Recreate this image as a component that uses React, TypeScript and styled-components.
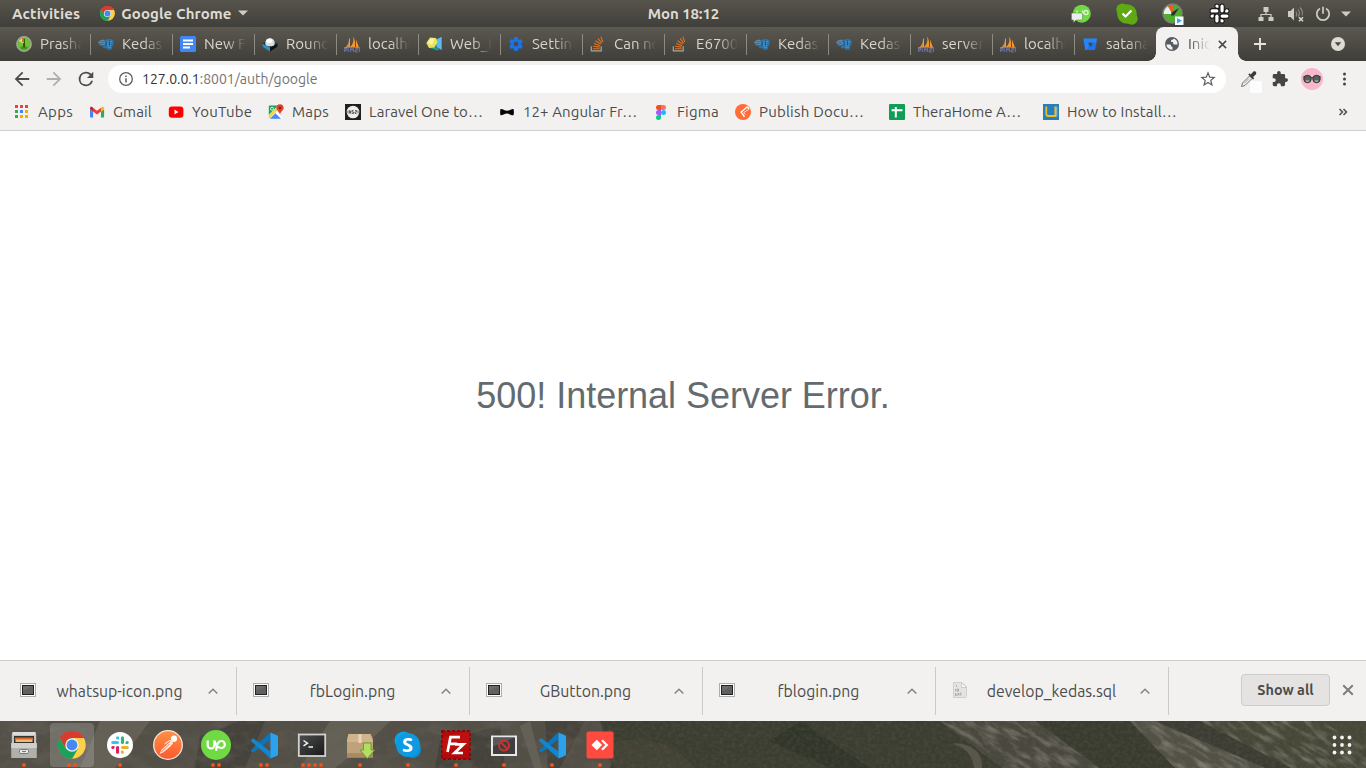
import React from "react";
import styled, { createGlobalStyle } from "styled-components";

const GlobalStyle = createGlobalStyle`
  * { box-sizing: border-box; }
  body { margin: 0; overflow: hidden; background: #fff; }
  svg { display: block; flex: none; overflow: visible; }
`;

const Desktop = styled.div`
  width: 1366px;
  height: 768px;
  display: flex;
  flex-direction: column;
  font-family: Ubuntu, "Noto Sans", "Open Sans", sans-serif;
  font-size: 15px;
  color: #4c4c4c;
`;

const Text = styled.span<{ $spacing?: number }>`
  white-space: pre;
  letter-spacing: ${(p) => p.$spacing ?? 0}px;
`;

/* ---------- system bar ---------- */

const SystemBar = styled.header`
  height: 27px;
  flex: none;
  display: grid;
  grid-template-columns: 1fr 80px 1fr;
  align-items: center;
  background: linear-gradient(#57544c, #403f3a);
  color: #dfdbd2;
  font-weight: 600;
  line-height: 17px;
`;

const SystemLeft = styled.div`
  display: flex;
  align-items: center;
  padding: 0 0 1px 12px;
`;

const AppMenu = styled.div`
  display: flex;
  align-items: center;
  gap: 6px;
  margin-left: 20px;
`;

const Clock = styled.div`
  padding: 0 0 1px 1px;
  text-align: center;
`;

const Tray = styled.div`
  display: flex;
  align-items: center;
  justify-content: flex-end;
  padding-right: 20px;
`;

const TraySlot = styled.div<{ $width: number }>`
  width: ${(p) => p.$width}px;
  display: flex;
  justify-content: center;
`;

/* ---------- tab strip ---------- */

const TabStrip = styled.nav`
  height: 34px;
  flex: none;
  display: flex;
  padding-left: 8px;
  background: linear-gradient(#5b5850, #3f3e39);
`;

const Tab = styled.div`
  width: 82px;
  height: 34px;
  display: flex;
  align-items: center;
  padding-left: 8px;
  color: #d9d6ce;
`;

const TabTitle = styled.div<{ $width: number }>`
  width: ${(p) => p.$width}px;
  margin: 0 0 2px 8px;
  overflow: hidden;
  mask-image: linear-gradient(to right, #000 calc(100% - 20px), transparent);
`;

const TabDivider = styled.i`
  width: 1px;
  height: 21px;
  margin-left: auto;
  margin-right: -1px;
  background: #8d8a82;
`;

const ActiveTab = styled(Tab)`
  position: relative;
  background: #f2f1f0;
  border-radius: 8px 8px 0 0;
  color: #4a4a4a;
  &::before,
  &::after {
    content: "";
    position: absolute;
    bottom: 0;
    width: 8px;
    height: 8px;
  }
  &::before {
    left: -8px;
    background: radial-gradient(circle at 0 0, transparent 7.5px, #f2f1f0 8px);
  }
  &::after {
    right: -8px;
    background: radial-gradient(circle at 100% 0, transparent 7.5px, #f2f1f0 8px);
  }
`;

const TabClose = styled.div`
  margin-left: 8px;
`;

const StripButtons = styled.div`
  flex: 1;
  display: flex;
  align-items: center;
  justify-content: space-between;
  padding: 0 20px 0 16px;
`;

/* ---------- toolbar and bookmarks ---------- */

const Toolbar = styled.div`
  height: 36px;
  flex: none;
  display: flex;
  align-items: center;
  padding-left: 14px;
  background: #f2f1f0;
`;

const NavButtons = styled.div`
  display: flex;
  gap: 16px;
  margin-right: 14px;
`;

const AddressBar = styled.div`
  width: 1118px;
  height: 28px;
  display: flex;
  align-items: center;
  justify-content: space-between;
  padding: 0 10px;
  border-radius: 14px;
  background: #fff;
`;

const Address = styled.div`
  display: flex;
  align-items: center;
  gap: 8px;
  font-size: 14px;
  color: #737373;
  b { font-weight: 400; color: #333; }
`;

const Extensions = styled.div`
  flex: 1;
  display: flex;
  align-items: center;
  padding-left: 14px;
`;

const Extension = styled.div<{ $gap: number }>`
  position: relative;
  margin-right: ${(p) => p.$gap}px;
`;

const ExtensionBadge = styled.i`
  position: absolute;
  left: 10px;
  top: 11px;
  width: 12px;
  height: 12px;
  border-radius: 2px;
  background: #fdfdfd;
`;

const BookmarkBar = styled.div`
  height: 34px;
  flex: none;
  display: flex;
  align-items: center;
  gap: 16px;
  padding: 0 18px 4px 14px;
  background: #f2f1f0;
  border-bottom: 1px solid #cfcfcf;
`;

const Bookmark = styled.div`
  display: flex;
  align-items: center;
  gap: 8px;
`;

const BookmarkTitle = styled.div<{ $width: number }>`
  width: ${(p) => p.$width}px;
  line-height: 20px;
`;

const Overflow = styled.div`
  margin-left: auto;
`;

/* ---------- page ---------- */

const Page = styled.main`
  flex: 1;
  display: flex;
  align-items: center;
  justify-content: center;
  background: #fff;
`;

const ErrorTitle = styled.h1`
  margin: 0;
  font: 400 36px/40px "Liberation Sans", Arial, sans-serif;
  letter-spacing: -0.03px;
  color: #636b6f;
`;

/* ---------- downloads ---------- */

const DownloadShelf = styled.section`
  height: 61px;
  flex: none;
  display: flex;
  align-items: center;
  padding: 0 12px 0 4px;
  background: #f2f1f0;
  border-top: 1px solid #cbcbcb;
`;

const Download = styled.div`
  width: 233px;
  height: 48px;
  display: flex;
  align-items: center;
  padding-left: 16px;
  border-right: 1px solid #cbcac9;
`;

const FileIcon = styled.div`
  margin-bottom: 2px;
`;

const FileName = styled.div`
  width: 167px;
  text-align: center;
  font-size: 15.8px;
`;

const Caret = styled.div`
  width: 19px;
  display: flex;
  justify-content: center;
`;

const ShelfActions = styled.div`
  margin-left: auto;
  margin-bottom: 2px;
  display: flex;
  align-items: center;
  gap: 12px;
`;

const ShowAll = styled.button`
  width: 89px;
  height: 32px;
  padding: 0;
  border: 1px solid #cdcccb;
  border-radius: 4px;
  background: #e4e3e2;
  font: inherit;
  font-size: 14.4px;
  font-weight: 600;
  color: #4c4c4c;
`;

/* ---------- dock ---------- */

const Dock = styled.footer`
  height: 47px;
  flex: none;
  position: relative;
  display: flex;
  align-items: stretch;
  overflow: hidden;
  background: #3c3b33;
`;

const Wallpaper = styled.svg`
  position: absolute;
  inset: 0;
`;

const DockItem = styled.div<{ $active?: boolean }>`
  position: relative;
  width: 44px;
  height: 44px;
  margin: 2px;
  display: flex;
  flex-direction: column;
  align-items: center;
  justify-content: center;
  border-radius: 4px;
  background: ${(p) => (p.$active ? "rgba(255,255,255,.18)" : "transparent")};
`;

const Dots = styled.div`
  position: absolute;
  bottom: 0;
  left: 0;
  right: 0;
  display: flex;
  justify-content: center;
  gap: 2px;
  i { width: 4px; height: 4px; border-radius: 50%; background: #e95420; }
`;

const AppGrid = styled.div`
  position: relative;
  margin: 14px 14px 0 auto;
`;

/* ---------- icons ---------- */

const Svg = ({ s = 16, h, v, children }: { s?: number; h?: number; v?: string; children: React.ReactNode }) => (
  <svg width={s} height={h ?? s} viewBox={v ?? `0 0 ${s} ${h ?? s}`} fill="none">
    {children}
  </svg>
);

const ChromeIcon = ({ s }: { s: number }) => (
  <Svg s={s} v="0 0 48 48">
    <circle cx="24" cy="24" r="23.500" fill="#fdd049" />
    <path d="M24 24 3.200 12A24 24 0 0 1 44.800 12H24Z" fill="#db3b2c" />
    <path d="M3.200 12A24 24 0 0 0 24 48L34.400 30 13.600 30Z" fill="#1da05a" />
    <path d="M3.200 12 13.600 30 24 24V12Z" fill="#1da05a" />
    <path d="M3.200 12A24 24 0 0 1 44.800 12H24A12 12 0 0 0 13 19.500L12 27.200Z" fill="#db3b2c" />
    <circle cx="24" cy="24" r="11.500" fill="#f1f1f1" />
    <circle cx="24" cy="24" r="9.300" fill="#4688f4" />
  </Svg>
);

const TimerIcon = () => (
  <Svg>
    <circle cx="8" cy="8" r="7.200" fill="#68b92d" stroke="#a4a8a1" strokeWidth="1.400" />
    <circle cx="8" cy="8" r="5.800" fill="#6fc52c" />
    <path d="M3.600 11.700A5.800 5.800 0 0 0 12.400 11.700L8 9Z" fill="#4a9a1b" />
    <path d="M8 8 3 5A5.800 5.800 0 0 1 7 2.300Z" fill="#e6e27a" />
    <path d="M7 2.300 6.500 6" stroke="#e24b28" strokeWidth="1.200" />
    <path d="M8.300 2.800V7" stroke="#27391a" strokeWidth="1" />
    <path d="M7.200 7h1.700l-.3 4.500H7.600Z" fill="#1d2d12" />
  </Svg>
);

const PgIcon = () => (
  <Svg>
    <path d="M.3 7C2 4.500 4.500 4.200 6.500 4.500 8 2.800 15 2.200 15.600 5c.4 2-.2 4.500-1.200 5L13.500 13.800H9.200l-.7-2-2.500.7-1.500-1.500 1-1.500L2 9.500Z" fill="#2a74ad" />
    <path d="M1 7.300 5 6l3 1M2.500 9.200l4.500-1.500M8.500 5.500h5.500M9 7.300h4.500M9 9.200l4 .3M9.500 11.300h3.500" stroke="#7f9fb5" strokeWidth=".6" />
    <path d="M.3 6.500C2 4.200 5 4 6.500 4.400" stroke="#8aa0af" strokeWidth=".8" />
    <path d="M8 5v4.500M11.500 4.500v5" stroke="#164a77" strokeWidth=".8" />
  </Svg>
);

const DocsIcon = () => (
  <Svg>
    <rect width="16" height="16" rx="1.500" fill="#4285f4" />
    <path d="M3 4.500h10M3 8h10M3 11.500h7" stroke="#fff" strokeWidth="1.800" />
  </Svg>
);

const RoundcubeIcon = () => (
  <Svg>
    <path d="M.3 7.500 8 4l7.700 3.500L8 12Z" fill="#1c323d" />
    <path d="M.5 7.800 8 11.500v4L.8 10.800Z" fill="#2b93c6" />
    <path d="M15.500 7.800 8 11.500v4l7.300-4.700Z" fill="#0c1114" />
    <path d="M3.200 7.500A4.800 5.500 0 0 1 12.800 7.500C12.800 9.500 10.500 10.300 8 10.300S3.200 9.500 3.200 7.500Z" fill="#d6dde0" />
    <ellipse cx="7.300" cy="5" rx="3" ry="2.200" fill="#fff" />
  </Svg>
);

const PmaIcon = () => (
  <Svg>
    <path d="M5 2.500C5.200 6 4 9 .8 12l4.700-1.200Z" fill="#d98a38" />
    <path d="M8.800.3C10 4 9.500 8 5.800 11.500l5.200-.5C11.600 7 11 3 8.800.3Z" fill="#f7941d" />
    <path d="m12 3.500 3 8-3-.3Z" fill="#f0953a" />
    <path d="M5.500 2.500v8.500" stroke="#f6b46a" strokeWidth=".8" />
    <path d="M.7 16v-3.800h2v2h-2m3.500 1.800v-3.800m2.500 3.800v-3.800l1.300 1.800 1.300-1.800v3.800m2-3.800h2v1.800h-2v2h2.500m1.500 0v-3.800" stroke="#7478aa" strokeWidth="1" />
    <path d="M0 11.800q8-1.500 16 0" stroke="#9b9dbb" strokeWidth=".7" />
  </Svg>
);

const WebIcon = () => (
  <Svg>
    <path d="M9.500 4 15.700.8V14l-5.200-3Z" fill="#58bdf0" />
    <path d="M2.500 11.500 8 9.500l5.500 4-2.500 1Z" fill="#1f9e83" />
    <path d="M.3 7 4 1.500 10 2l1.500 4L8.500 11.500 3 12Z" fill="#e7e35c" />
    <path d="M1.500 6.500 4.600 2.500l3.900.5L6 9Z" fill="#f6f5a6" />
  </Svg>
);

const GearIcon = () => (
  <Svg v="0.500 0.500 23 23">
    <path
      fill="#1a73e8"
      d="M19.430 12.980a8 8 0 0 0 0-1.960l2.110-1.650a.5.5 0 0 0 .12-.64l-2-3.460a.5.5 0 0 0-.61-.22l-2.490 1a7.300 7.300 0 0 0-1.690-.98l-.38-2.650A.5.5 0 0 0 14 2h-4a.5.5 0 0 0-.49.42l-.38 2.650c-.61.250-1.170.590-1.690.980l-2.490-1a.5.5 0 0 0-.61.220l-2 3.460a.5.5 0 0 0 .12.640l2.110 1.650a8 8 0 0 0 0 1.960l-2.110 1.650a.5.5 0 0 0-.12.640l2 3.460c.12.220.39.300.61.220l2.490-1c.52.400 1.080.730 1.690.980l.38 2.650c.03.240.24.420.49.420h4c.25 0 .46-.18.49-.42l.38-2.650a7.300 7.300 0 0 0 1.690-.98l2.490 1c.23.090.49 0 .61-.22l2-3.460a.5.5 0 0 0-.12-.64ZM12 15.500a3.500 3.500 0 1 1 0-7 3.500 3.500 0 0 1 0 7Z"
    />
  </Svg>
);

const StackIcon = () => (
  <Svg>
    <path d="M1.300 10.300v4.600h9.900v-4.600" stroke="#a9a7a3" strokeWidth="1.200" />
    <path d="M3 12.800h6.700M3.200 10.200l6.400.9M4 7.400l6 2.300M5.500 4.700l5.300 3.600M8 2.400l3.700 4.700M10.800.6l2 5.400" stroke="#e8701a" strokeWidth="1.100" />
  </Svg>
);

const BitbucketIcon = () => (
  <Svg>
    <path d="M2 2.500h12.500a.6.600 0 0 1 .5.700l-1.900 10.300a.7.700 0 0 1-.6.500H4a.8.800 0 0 1-.8-.6L1.400 3.200a.6.600 0 0 1 .6-.7Zm4.300 4 .8 3.800h2.700l.8-3.800Z" fill="#2684ff" fillRule="evenodd" />
    <path d="m14.300 6.500-1.200 7a.7.700 0 0 1-.6.500H4l3.200-3.700h2.600l.8-3.800Z" fill="#1263dd" opacity=".5" />
  </Svg>
);

const GlobeIcon = () => (
  <Svg>
    <circle cx="8" cy="8" r="7" fill="#555b61" />
    <path d="M2.300 8.500h3.500c.7 0 1.200.5 1.200 1.200v.8c1 0 1.500.5 1.500 1.300V13.600A5.700 5.700 0 0 1 2.300 8.500ZM9.500 2.500c0 1-.7 1.300-1.500 1.300-.9 0-1 .7-1 1.200 0 .6.500 1 1.200 1 .9 0 1 .7 1 1.300 0 .8.600 1.200 1.300 1.200h3A5.800 5.800 0 0 0 9.500 2.500Z" fill="#f2f1f0" />
  </Svg>
);

const Cross = ({ s, w, c }: { s: number; w: number; c: string }) => (
  <Svg s={s} v="0 0 10 10">
    <path d="m1 1 8 8M9 1 1 9" stroke={c} strokeWidth={w} />
  </Svg>
);

const AppsIcon = () => (
  <Svg>
    {["#ea4335", "#ea4335", "#ea4335", "#34a853", "#4285f4", "#f9ab00", "#34a853", "#f9ab00", "#f9ab00"].map((c, i) => (
      <rect key={i} x={1 + (i % 3) * 5} y={1 + Math.floor(i / 3) * 5} width="3" height="3" fill={c} />
    ))}
  </Svg>
);

const GmailIcon = () => (
  <Svg>
    <path d="M1.500 13.500h2.600V7.500L1 5.300v7.500c0 .5.200.7.500.7Z" fill="#4285f4" />
    <path d="M12 13.500h2.500c.4 0 .6-.3.600-.7V5.300L12 7.500Z" fill="#34a853" />
    <path d="M12 3.700v3.800l3.100-2.200V4.200c0-1.400-1.500-2-2.500-1Z" fill="#fbbc04" />
    <path d="M4 7.500V3.700l4 3 4-3v3.800L8 10.500Z" fill="#ea4335" />
    <path d="M1 4.200v1.100l3.100 2.200V3.700l-.6-.5C2.500 2.300 1 2.800 1 4.200Z" fill="#c5221f" />
  </Svg>
);

const YoutubeIcon = () => (
  <Svg>
    <rect x=".8" y="2.500" width="14.600" height="11.200" rx="3" fill="#f00" />
    <path d="m6.500 5.600 4 2.500-4 2.500Z" fill="#fff" />
  </Svg>
);

const MapsIcon = () => (
  <Svg>
    <rect x=".8" y="1.600" width="13" height="13.200" rx="1" fill="#e4e4e2" />
    <path d="M.8 2.600c0-.6.400-1 1-1H10L.8 11Z" fill="#1fa463" />
    <path d="m2 14.800 5.600-5.600 5.600 5.600Z" fill="#4a89f3" />
    <path d="M.8 11 10 1.600l1.500 2L1.500 14.500l-.7-.7Z" fill="#f9d34a" />
    <path d="M7.600 9.200 9.200 7.700l4.600 4.800v2.300h-.7Z" fill="#fff" />
    <circle cx="4" cy="4.800" r="1.500" stroke="#d6eedd" />
    <path d="M12 .3a3.600 3.600 0 0 1 3.600 3.600C15.600 6.500 12.600 7 12 10.500 11.400 7 8.400 6.500 8.400 3.900A3.600 3.600 0 0 1 12 .3Z" fill="#e0402f" />
    <circle cx="12" cy="3.900" r="1.200" fill="#7d1f17" />
  </Svg>
);

const LaravelDocIcon = () => (
  <Svg>
    <rect width="16" height="16" fill="#1f1f1f" />
    <circle cx="8" cy="8" r="6.300" fill="#eee" />
    <path d="M3 6.500v3m1.500 0v-3l1.300 3v-3M8.500 6.500H7V8h1.500v1.500H7M10 6.500h1.500V8H10v1.500h1.500m1.500-3v3" stroke="#444" strokeWidth=".8" />
  </Svg>
);

const BowIcon = () => (
  <Svg>
    <path d="M1.500 5c2.500-.3 3.500 1.500 6.500 1.800C11 6.500 12 4.700 14.500 5c.5 2 .5 4.500 0 6.300C12 11.500 11 9.700 8 9.500c-3 .2-4 2-6.500 1.800-.5-1.800-.5-4.300 0-6.300Z" fill="#050505" />
  </Svg>
);

const FigmaIcon = () => (
  <Svg>
    <path d="M8 1v5H5.500a2.500 2.500 0 0 1 0-5Z" fill="#f24e1e" />
    <path d="M8 1h2.500a2.500 2.500 0 0 1 0 5H8Z" fill="#ff7262" />
    <path d="M8 6v5H5.500a2.500 2.500 0 0 1 0-5Z" fill="#a259ff" />
    <circle cx="10.500" cy="8.500" r="2.500" fill="#1abcfe" />
    <path d="M8 11v2.500A2.500 2.500 0 1 1 5.500 11Z" fill="#0acf83" />
  </Svg>
);

const PublishIcon = () => (
  <Svg>
    <circle cx="8" cy="8" r="8" fill="#ff6c37" />
    <path d="M12.500 2.800 6 8.200 9.500 12.800" stroke="#fff" strokeWidth="1.300" />
    <path d="M13.500 5.500 8.500 8.800l2 2" stroke="#ffd9ca" strokeWidth="1" />
    <path d="M12.500 2.500 14 5.300" stroke="#fff" strokeWidth="1.500" />
  </Svg>
);

const SheetsIcon = () => (
  <Svg>
    <rect width="16" height="16" rx="1" fill="#0f9d58" />
    <path d="M2.500 6.300h11M6.800 3v10.500" stroke="#fff" strokeWidth="2" />
  </Svg>
);

const InstallIcon = () => (
  <Svg>
    <rect width="16" height="16" fill="#2a7fba" />
    <path d="M3.300 2.500v7.500a2 2 0 0 0 2 2h7V2.500" stroke="#e9bf22" strokeWidth="1.800" />
    <path d="M13.800 2.500v10" stroke="#f5e9c2" strokeWidth=".6" />
  </Svg>
);

const BackIcon = ({ color }: { color: string }) => (
  <Svg v="3.200 3.200 17.600 17.600">
    <path d="M20 11H7.830l5.590-5.590L12 4l-8 8 8 8 1.410-1.410L7.830 13H20Z" fill={color} />
  </Svg>
);

const ForwardIcon = ({ color }: { color: string }) => (
  <Svg v="3.200 3.200 17.600 17.600">
    <path d="m12 4-1.410 1.410L16.170 11H4v2h12.170l-5.580 5.590L12 20l8-8Z" fill={color} />
  </Svg>
);

const ReloadIcon = () => (
  <Svg v="3.200 3.200 17.600 17.600">
    <path d="M17.650 6.350A8 8 0 1 0 19.730 14h-2.080A6 6 0 1 1 12 6c1.660 0 3.140.690 4.220 1.780L13 11h7V4Z" fill="#4c4c4c" />
  </Svg>
);

const InfoIcon = () => (
  <Svg>
    <circle cx="8" cy="8" r="6.300" stroke="#5c5c5c" strokeWidth="1.300" />
    <path d="M8 7.200v4.200M8 4.400v1.500" stroke="#5c5c5c" strokeWidth="1.500" />
  </Svg>
);

const StarIcon = () => (
  <Svg>
    <path d="m8 1.800 1.700 4.300 4.600.3-3.500 3 1.100 4.500L8 11.400l-3.900 2.500 1.100-4.500-3.500-3 4.600-.3Z" stroke="#5c5c5c" strokeWidth="1.200" />
  </Svg>
);

const DropperIcon = () => (
  <Svg s={18}>
    <path d="M1.500 16.500 2.500 13 9.500 6l2.500 2.500L5 15.500Z" fill="#ededed" stroke="#666" strokeWidth=".9" />
    <path d="m8.300 4.500 1.200-1.200 1.200 1.200 2.500-2.800c1.500-1.500 4.300.5 2.600 2.800L13 7l1.200 1.200L13 9.500Z" fill="#3b3b3b" />
    <path d="m4 13.500 5-5" stroke="#aaa" />
  </Svg>
);

const PuzzleIcon = () => (
  <Svg v="1 1 22 22">
    <path d="M20.500 11H19V7a2 2 0 0 0-2-2h-4V3.500a2.500 2.500 0 0 0-5 0V5H4a2 2 0 0 0-2 2v3.800h1.500a2.700 2.700 0 0 1 0 5.400H2V20c0 1.100.9 2 2 2h3.800v-1.500a2.700 2.700 0 0 1 5.400 0V22H17a2 2 0 0 0 2-2v-4h1.500a2.500 2.500 0 0 0 0-5Z" fill="#454545" />
  </Svg>
);

const AvatarIcon = () => (
  <Svg s={22}>
    <circle cx="11" cy="11" r="11" fill="#f8b7cd" />
    <path d="M2 9.300 6 8M20 9.300 16 8M9.800 10q1.200-1 2.400 0" stroke="#444" strokeWidth="1.200" />
    <circle cx="6.500" cy="11" r="3.700" fill="#56605f" stroke="#333" strokeWidth="1" />
    <circle cx="15.500" cy="11" r="3.700" fill="#56605f" stroke="#333" strokeWidth="1" />
    <path d="M4.800 12.500a2.200 1.600 0 0 0 3.400 0M13.800 12.500a2.200 1.600 0 0 0 3.400 0" stroke="#a5b1b1" strokeWidth="1.300" />
  </Svg>
);

const MenuIcon = () => (
  <Svg>
    <circle cx="8.500" cy="3" r="1.500" fill="#454545" />
    <circle cx="8.500" cy="8" r="1.500" fill="#454545" />
    <circle cx="8.500" cy="13" r="1.500" fill="#454545" />
  </Svg>
);

const UpChatIcon = () => (
  <Svg s={20}>
    <circle cx="10.800" cy="9.700" r="9" fill="#6fda44" />
    <path d="M6 6.500v2.500M11 6.500C12 9 13 10.500 15 10.500a2 2 0 0 0 0-4c-1.500 0-2.200 1.200-2.500 3.500" stroke="#d9f6cc" strokeWidth="1.400" />
    <path d="M1.500 9h9a1 1 0 0 1 1 1v5a1 1 0 0 1-1 1H5l-2.500 2.500V16h-1a1 1 0 0 1-1-1v-5a1 1 0 0 1 1-1Z" fill="#ececec" stroke="#5c8f49" strokeWidth=".6" />
  </Svg>
);

const SkypeTrayIcon = () => (
  <Svg s={22}>
    <circle cx="11" cy="11" r="9.800" fill="#5fa912" />
    <circle cx="6.300" cy="6.500" r="6" fill="#5fa912" />
    <circle cx="15.700" cy="15.700" r="6" fill="#5fa912" />
    <path d="m6.500 10.500 3 3 6-6" stroke="#fff" strokeWidth="2.200" />
  </Svg>
);

const GaugeIcon = () => (
  <Svg s={22}>
    <circle cx="10.500" cy="10.500" r="9.500" fill="#4fae2f" stroke="#7b7f78" strokeWidth="1.600" />
    <path d="M10.500 11H1.800A9 9 0 0 1 6 3.200Z" fill="#efefef" />
    <path d="M10.500 11 6 3.300A9 9 0 0 1 11.500 1.900Z" fill="#f15a24" />
    <path d="M9 12.500 9.500 9.500l7.500-4.500-5 7.500Z" fill="#2f2f2f" />
    <rect x="13" y="13.500" width="8.500" height="8.500" fill="#f6fbff" />
    <path d="m15 15 5 2.700-5 2.700Z" fill="#35a7e8" />
  </Svg>
);

const slackParts = ["M9 2.200a1.700 1.700 0 0 0-3.400 0A1.700 1.700 0 0 0 7.300 4H9Z", "M2.200 5.600h5a1.700 1.700 0 0 1 0 3.400h-5a1.700 1.700 0 0 1 0-3.400Z"];

const SlackPetals = ({ colors, outline }: { colors: string[]; outline?: string }) => (
  <>
    {colors.map((c, i) => (
      <g key={i} transform={`rotate(${i * 90} 10 10)`}>
        {slackParts.map((d) => (
          <path key={d} d={d} fill={c} stroke={outline} strokeWidth={outline ? 2 : 0} />
        ))}
      </g>
    ))}
  </>
);

const SlackTrayIcon = () => (
  <Svg s={19} v="0 0 20 20">
    <SlackPetals colors={["#111", "#111", "#111", "#111"]} outline="#111" />
    <SlackPetals colors={["#fff", "#fff", "#fff", "#fff"]} />
  </Svg>
);

const NetworkIcon = () => (
  <Svg>
    <path d="M5.500 1h5v5h-5ZM.5 11h5v4h-5ZM10.500 11h5v4h-5Z" fill="#cfccc4" />
    <path d="M8 6v2.500M3 11V8.500h10V11" stroke="#cfccc4" strokeWidth="1.200" />
  </Svg>
);

const MutedIcon = () => (
  <Svg s={17} h={16}>
    <path d="M1 5h2.500L7 1.500v13L3.500 11H1Z" fill="#cfccc4" />
    <path d="M9 5.500q1.500 2.500 0 5M11 3.500q3 4 0 7M13 1.500q3.500 4 2 8" stroke="#8c8a83" strokeWidth="1.200" />
    <path d="m12 11.300 4 4m0-4-4 4" stroke="#d8d5cd" strokeWidth="1.600" />
  </Svg>
);

const PowerIcon = () => (
  <Svg>
    <path d="M5 2.500a6.200 6.200 0 1 0 6 0M8 .8v7" stroke="#cfccc4" strokeWidth="1.700" />
  </Svg>
);

const DownCaret = () => (
  <Svg s={10} h={6}>
    <path d="M0 .5h10L5 5.500Z" fill="#cfccc4" />
  </Svg>
);

const ImageFileIcon = () => (
  <Svg>
    <rect x=".5" y="1.500" width="15" height="13" fill="#fff" stroke="#adadad" />
    <rect x="2.500" y="3.500" width="11" height="9" fill="#606060" stroke="#222" />
    <path d="M3 4h10L3 9Z" fill="#6d6d6d" />
  </Svg>
);

const SqlFileIcon = () => (
  <Svg>
    <path d="M1.500.5h8.500l4.500 4.500v9.500a1 1 0 0 1-1 1h-12Z" fill="#e4e4e4" stroke="#cfcfcf" />
    <path d="M9.500.5v5h5Z" fill="#f8f8f8" stroke="#c4c4c4" strokeWidth=".8" />
    <path d="M4.500 3v2M3.500 7v2.300m1.500-2.300h1.500v2.300H5ZM3.500 11v2.500h1.500V11m1.500 0v2.500m1.500 0V11h1v2.500" stroke="#a9a9a9" strokeWidth=".9" />
  </Svg>
);

const FilesIcon = () => (
  <Svg s={28}>
    <path d="M2.500 1h23l.7 4H1.800Z" fill="#dcdcda" />
    <path d="M1.800 4h24.400v8H1.800Z" fill="#c2c2bf" />
    <path d="M4 5h20v7H4Z" fill="#34302c" />
    <path d="M5 6.500h18V9H5Z" fill="#d7692c" />
    <path d="M5.500 8.500h17v2.500h-17Z" fill="#f0b77a" />
    <path d="M1.200 12h25.600v15H1.200Z" fill="#b0b0ad" />
    <path d="M1.200 12h25.600v5H1.200Z" fill="#cfcfcc" />
    <rect x="9.500" y="18.500" width="9" height="4" rx="1.300" fill="#eee" stroke="#777" />
    <path d="M12 20.500h4" stroke="#777" strokeWidth="1.200" />
  </Svg>
);

const SlackIcon = () => (
  <Svg s={28}>
    <circle cx="14" cy="14" r="13" fill="#fff" />
    <g transform="translate(4.800 4.800) scale(.92)">
      <SlackPetals colors={["#36c5f0", "#2eb67d", "#ecb22e", "#e01e5a"]} />
    </g>
  </Svg>
);

const PostmanIcon = () => (
  <Svg s={30}>
    <defs>
      <linearGradient id="pm" x1="0" y1="0" x2="0" y2="1">
        <stop stopColor="#ff8f47" />
        <stop offset="1" stopColor="#fd5a2c" />
      </linearGradient>
    </defs>
    <circle cx="15" cy="15" r="14.300" fill="url(#pm)" stroke="#f6e4dc" strokeWidth="1.300" />
    <path d="M6.500 24 8.500 19.800 15.500 13l2.500-2.200 2.200 2.200-2.700 3.200-7 6Z" fill="#fbe9e1" />
    <path d="m8.500 22 8-8" stroke="#f0703c" strokeWidth=".9" />
    <circle cx="21" cy="8.700" r="3.100" fill="#fff" />
    <path d="m11.500 14 5-3.500 3 1" stroke="#fff" strokeWidth="1" />
  </Svg>
);

const UpworkIcon = () => (
  <Svg s={30}>
    <circle cx="15" cy="15" r="15" fill="#6fda44" />
    <path d="M6.700 10.500v4.700a3.300 3.300 0 0 0 6.600 0v-4.700c1.300 4.500 3.800 7.500 7 7.500a3.500 3.500 0 1 0 0-7c-3.300 0-4.200 3-5.300 9.800" stroke="#fff" strokeWidth="2.200" />
  </Svg>
);

const CodeIcon = () => (
  <Svg s={27} v="0 0 100 100">
    <path d="M72 2v26L10 75.500a5 5 0 0 1-4 0L1 71a4 4 0 0 1 0-5Z" fill="#0b76be" />
    <path d="M72 98V72L10 24.500a5 5 0 0 0-4 0L1 29a4 4 0 0 0 0 5Z" fill="#1187ce" />
    <path d="M72 2 96 12a6 6 0 0 1 4 5v66a6 6 0 0 1-4 5L72 98Z" fill="#2ba2ef" />
  </Svg>
);

const TerminalIcon = () => (
  <Svg s={28} h={24}>
    <defs>
      <linearGradient id="tm" x1="0" y1="0" x2="1" y2="1">
        <stop stopColor="#4d4f4e" />
        <stop offset="1" stopColor="#171717" />
      </linearGradient>
    </defs>
    <rect x=".8" y="1.500" width="26.400" height="21.500" fill="url(#tm)" stroke="#d2d2d0" strokeWidth="1.800" />
    <path d="m5.500 7.500 4 2.700-4 2.700M10.500 14h4.500" stroke="#f4f4f4" strokeWidth="1.400" />
  </Svg>
);

const PackageIcon = () => (
  <Svg s={28}>
    <path d="M2.500 3h22L27 8v18.500H1V8Z" fill="#bfa27a" />
    <path d="M2.500 3h22L27 11H1Z" fill="#d0b48a" />
    <path d="M1 22h26v4.500H1Z" fill="#a98a61" />
    <path d="M12.500 3h3v9h-3Z" fill="#e6d5b6" />
    <path d="M17.500 12h7.500v7h3.500l-7.200 8.500-7.300-8.500h3.500Z" fill="#b4de63" stroke="#6da02c" />
  </Svg>
);

const SkypeLetter = styled.text`
  font: 700 20px "Noto Sans", sans-serif;
  fill: #fff;
  text-anchor: middle;
`;

const SkypeIcon = () => (
  <Svg s={28}>
    <circle cx="9.500" cy="9.500" r="9" fill="#0aa5e6" />
    <circle cx="18.500" cy="18.500" r="8.500" fill="#0a8fd8" />
    <circle cx="14" cy="14" r="12" fill="#0d9ae0" />
    <SkypeLetter x="13.500" y="21">S</SkypeLetter>
  </Svg>
);

const FilezillaIcon = () => (
  <Svg s={30}>
    <rect x="1" y="1" width="28" height="28" fill="#b30b0b" stroke="#8d0707" strokeWidth="2" strokeDasharray="3 2" />
    <path d="M1.500 8Q15 3 28.500 2v14Q12 15 1.500 24Z" fill="#c51512" opacity=".6" />
    <path d="M6.500 22 9.500 7.200h9.500M8 13.800h8M14 14.300h8.500L13.500 23h8.500" stroke="#fff" strokeWidth="2.700" />
  </Svg>
);

const BlockedIcon = () => (
  <Svg s={28} h={22}>
    <rect x="2" y="2.500" width="24" height="18.500" fill="#3e3e3e" stroke="#e7e7e7" strokeWidth="2" />
    <path d="M3 3.500h22L3 12.500Z" fill="#585858" />
    <circle cx="14" cy="11.500" r="5" stroke="#c8352f" strokeWidth="2" />
    <path d="m10.500 8 7 7" stroke="#c8352f" strokeWidth="2" />
  </Svg>
);

const AnydeskIcon = () => (
  <Svg s={28}>
    <rect x=".5" y=".5" width="27" height="27" rx="2" fill="#ff4a40" />
    <path d="m10.800 8.700 5.300 5.300-5.300 5.300L5.500 14Z" fill="#fff" />
    <path d="m16 9.300 4.800 4.700-4.800 4.700" stroke="#fff" strokeWidth="2.200" />
  </Svg>
);

const WallpaperArt = () => (
  <Wallpaper width="1366" height="47" viewBox="0 0 1366 47">
    <defs>
      <filter id="rock" x="0" y="0" width="100%" height="100%">
        <feTurbulence type="fractalNoise" baseFrequency=".04 .07" numOctaves="5" seed="8" />
        <feColorMatrix values="0 0 0 0 .14  0 0 0 0 .13  0 0 0 0 .11  3 1.500 0 0 -2.100" />
      </filter>
      <filter id="slope" x="0" y="0" width="100%" height="100%">
        <feTurbulence type="fractalNoise" baseFrequency=".05 .2" numOctaves="4" seed="5" />
        <feColorMatrix values="0 0 0 0 .5  0 0 0 0 .48  0 0 0 0 .42  2 1.500 0 0 -1.600" />
      </filter>
      <filter id="trees" x="0" y="0" width="100%" height="100%">
        <feTurbulence type="fractalNoise" baseFrequency=".25 .3" numOctaves="3" seed="3" />
        <feColorMatrix values="0 0 0 0 .1  0 0 0 0 .12  0 0 0 0 .08  1.500 0 0 0 -.55" />
      </filter>
      <clipPath id="slopes">
        <path d="M940 0h95l65 47h-98ZM1130 0h25l110 47h-90ZM1200 0h120l46 25v22h-75Z" />
      </clipPath>
    </defs>
    <path d="M0 0h1366v47H0Z" fill="#3d3c34" />
    <path d="M0 0h620l-10 47H0Z" fill="#534f47" />
    <path d="M100 0h50l-35 47H80ZM330 0h60l-15 15-40 32H300ZM530 0l12 47h-8L520 5Z" fill="#656056" />
    <path d="M200 15l40-15h25l-20 47h-50ZM440 20l60-15 5 42h-70ZM545 0h40l-25 47h-12Z" fill="#45423b" />
    <path d="M600 0h340l60 47H615Z" fill="#3b3d30" />
    <path d="M800 0 870 47H830L770 20Z" fill="#31352a" />
    <path d="M600 25q60-20 95 22h-80Z" fill="#434234" />
    <path d="M940 0h95l65 47h-98Z" fill="#4a473e" />
    <path d="M955 22q28 2 27 25h-8q-2-18-19-23Z" fill="#5a554a" />
    <path d="M1040 0h90l45 47h-75Z" fill="#393b2f" />
    <path d="M1130 0h25l110 47h-90Z" fill="#535046" />
    <path d="M1200 0h166v47h-75Z" fill="#474738" />
    <rect width="615" height="47" filter="url(#rock)" opacity=".42" />
    <g clipPath="url(#slopes)">
      <g transform="rotate(32 1150 20)">
        <rect x="900" y="-140" width="500" height="320" filter="url(#slope)" opacity=".4" />
      </g>
    </g>
    <rect x="600" width="766" height="47" filter="url(#trees)" opacity=".45" />
    <rect width="600" height="47" filter="url(#trees)" opacity=".25" />
  </Wallpaper>
);

/* ---------- data ---------- */

const tabs: [React.ReactNode, string][] = [
  [<TimerIcon />, "Prashant"],
  [<PgIcon />, "Kedas |"],
  [<DocsIcon />, "New Fea"],
  [<RoundcubeIcon />, "Roundc"],
  [<PmaIcon />, "localhost"],
  [<WebIcon />, "Web_K"],
  [<GearIcon />, "Settings"],
  [<StackIcon />, "Can not"],
  [<StackIcon />, "E67001"],
  [<PgIcon />, "Kedas |"],
  [<PgIcon />, "Kedas |"],
  [<PmaIcon />, "server 1"],
  [<PmaIcon />, "localhost"],
  [<BitbucketIcon />, "satanam"],
];

const bookmarks: [React.ReactNode, string, number, number][] = [
  [<AppsIcon />, "Apps", 35, 0.3],
  [<GmailIcon />, "Gmail", 39, 0.12],
  [<YoutubeIcon />, "YouTube", 60, 0.2],
  [<MapsIcon />, "Maps", 37, 0.25],
  [<LaravelDocIcon />, "Laravel One to…", 114, 0.05],
  [<BowIcon />, "12+ Angular Fr…", 114, 0.1],
  [<FigmaIcon />, "Figma", 42, 0.2],
  [<PublishIcon />, "Publish Docu…", 114, 0.22],
  [<SheetsIcon />, "TheraHome A…", 114, 0.05],
  [<InstallIcon />, "How to Install…", 114, 0.15],
];

const downloads: [React.ReactNode, string][] = [
  [<ImageFileIcon />, "whatsup-icon.png"],
  [<ImageFileIcon />, "fbLogin.png"],
  [<ImageFileIcon />, "GButton.png"],
  [<ImageFileIcon />, "fblogin.png"],
  [<SqlFileIcon />, "develop_kedas.sql"],
];

const dockApps: [React.ReactNode, number][] = [
  [<FilesIcon />, 1],
  [<ChromeIcon s={28} />, 2],
  [<SlackIcon />, 1],
  [<PostmanIcon />, 0],
  [<UpworkIcon />, 2],
  [<CodeIcon />, 2],
  [<TerminalIcon />, 4],
  [<PackageIcon />, 1],
  [<SkypeIcon />, 1],
  [<FilezillaIcon />, 1],
  [<BlockedIcon />, 1],
  [<CodeIcon />, 1],
  [<AnydeskIcon />, 1],
];

export default function App() {
  return (
    <Desktop>
      <GlobalStyle />
      <SystemBar>
        <SystemLeft>
          <Text $spacing={0.15}>Activities</Text>
          <AppMenu>
            <ChromeIcon s={15} />
            <Text $spacing={0.1}>Google Chrome</Text>
            <DownCaret />
          </AppMenu>
        </SystemLeft>
        <Clock>
          <Text $spacing={-0.1}>Mon 18:12</Text>
        </Clock>
        <Tray>
          <TraySlot $width={46}><UpChatIcon /></TraySlot>
          <TraySlot $width={46}><SkypeTrayIcon /></TraySlot>
          <TraySlot $width={46}><GaugeIcon /></TraySlot>
          <TraySlot $width={46}><SlackTrayIcon /></TraySlot>
          <TraySlot $width={48}><NetworkIcon /></TraySlot>
          <TraySlot $width={10}><MutedIcon /></TraySlot>
          <TraySlot $width={46}><PowerIcon /></TraySlot>
          <TraySlot $width={0}><DownCaret /></TraySlot>
        </Tray>
      </SystemBar>

      <TabStrip>
        {tabs.map(([icon, title], i) => (
          <Tab key={i}>
            {icon}
            <TabTitle $width={42}><Text>{title}</Text></TabTitle>
            {i < tabs.length - 1 && <TabDivider />}
          </Tab>
        ))}
        <ActiveTab>
          <GlobeIcon />
          <TabTitle $width={22}><Text>Inicio</Text></TabTitle>
          <TabClose><Cross s={9} w={1.8} c="#4c4c4c" /></TabClose>
        </ActiveTab>
        <StripButtons>
          <Svg s={12}><path d="M6 0v12M0 6h12" stroke="#e6e3da" strokeWidth="1.900" /></Svg>
          <Svg s={16}>
            <circle cx="8" cy="8" r="7" fill="#dfdbd2" />
            <path d="M4.800 6.300h6.400L8 10.200Z" fill="#4a4842" />
          </Svg>
        </StripButtons>
      </TabStrip>

      <Toolbar>
        <NavButtons>
          <BackIcon color="#4c4c4c" />
          <ForwardIcon color="#b0afae" />
          <ReloadIcon />
        </NavButtons>
        <AddressBar>
          <Address>
            <InfoIcon />
            <Text><b>127.0.0.1</b>:8001/auth/google</Text>
          </Address>
          <StarIcon />
        </AddressBar>
        <Extensions>
          <Extension $gap={14}><DropperIcon /><ExtensionBadge /></Extension>
          <Extension $gap={13}><PuzzleIcon /></Extension>
          <Extension $gap={13}><AvatarIcon /></Extension>
          <MenuIcon />
        </Extensions>
      </Toolbar>

      <BookmarkBar>
        {bookmarks.map(([icon, title, width, spacing]) => (
          <Bookmark key={title}>
            {icon}
            <BookmarkTitle $width={width}><Text $spacing={spacing}>{title}</Text></BookmarkTitle>
          </Bookmark>
        ))}
        <Overflow>
          <Svg s={10} h={8}><path d="m1.500 1 3 3-3 3M5.500 1l3 3-3 3" stroke="#4c4c4c" strokeWidth="1.500" /></Svg>
        </Overflow>
      </BookmarkBar>

      <Page>
        <ErrorTitle>500! Internal Server Error.</ErrorTitle>
      </Page>

      <DownloadShelf>
        {downloads.map(([icon, name]) => (
          <Download key={name}>
            <FileIcon>{icon}</FileIcon>
            <FileName><Text>{name}</Text></FileName>
            <Caret><Svg s={10} h={6}><path d="m.7 5.500 4.300-4.300 4.300 4.300" stroke="#848484" strokeWidth="1.500" /></Svg></Caret>
          </Download>
        ))}
        <ShelfActions>
          <ShowAll><Text>Show all</Text></ShowAll>
          <Cross s={12} w={1.6} c="#7c7c7c" />
        </ShelfActions>
      </DownloadShelf>

      <Dock>
        <WallpaperArt />
        {dockApps.map(([icon, windows], i) => (
          <DockItem key={i} $active={i === 1}>
            {icon}
            <Dots>{Array.from({ length: windows }, (_, n) => <i key={n} />)}</Dots>
          </DockItem>
        ))}
        <AppGrid>
          <Svg s={20}>
            {Array.from({ length: 9 }, (_, i) => (
              <circle key={i} cx={2.5 + (i % 3) * 7.5} cy={2.5 + Math.floor(i / 3) * 7.5} r="1.900" fill="#f3f3f1" />
            ))}
          </Svg>
        </AppGrid>
      </Dock>
    </Desktop>
  );
}
